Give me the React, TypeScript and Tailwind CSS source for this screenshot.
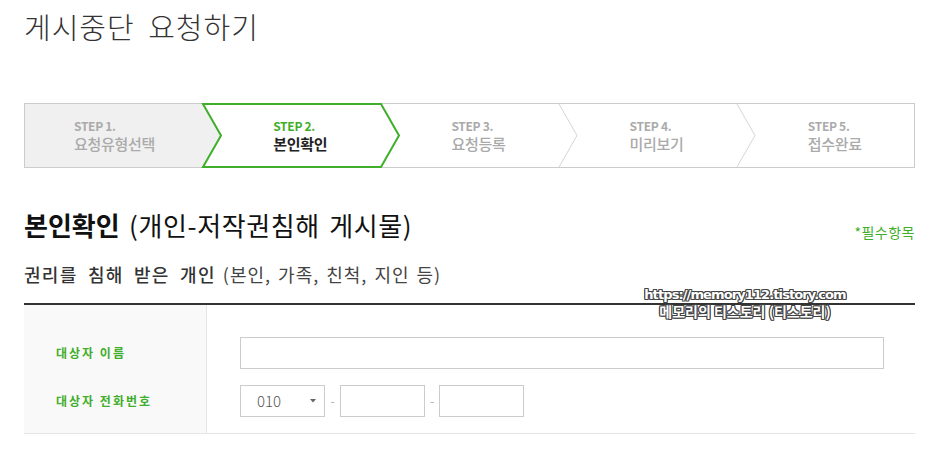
import React from "react";

const steps = [
  { n: "STEP 1.", t: "요청유형선택" },
  { n: "STEP 2.", t: "본인확인" },
  { n: "STEP 3.", t: "요청등록" },
  { n: "STEP 4.", t: "미리보기" },
  { n: "STEP 5.", t: "접수완료" },
];

function StepBar() {
  return (
    <div className="relative ml-[24px] mt-[57px] h-[65px] w-[891px]">
      <svg className="absolute inset-0" width="891" height="65" viewBox="0 0 891 65">
        <rect x="0.5" y="0.5" width="890" height="64" fill="#fff" stroke="#cccccc" />
        <polygon points="1,1 179,1 197,32.5 179,64 1,64" fill="#f0f0f0" />
        <polygon points="179,1 357,1 375,32.5 357,64 179,64 197,32.5" fill="#fff" stroke="#3fae2a" strokeWidth="2" strokeLinejoin="miter" />
        <polyline points="535,1 553,32.5 535,64" fill="none" stroke="#d6d6d6" />
        <polyline points="713,1 731,32.5 713,64" fill="none" stroke="#d6d6d6" />
      </svg>
      <div className="relative grid h-full grid-cols-5">
        {steps.map((s, i) => (
          <div key={i} className={`${i === 0 ? "pl-[50px]" : "pl-[71px]"} pt-[14px]`}>
            <div
              className={`text-[12px] font-bold leading-[17px] tracking-[-0.3px] ${i === 1 ? "text-[#3fae2a]" : "text-[#aaaaaa]"}`}
            >
              {s.n}
            </div>
            <div
              className={`text-[15px] leading-[20px] tracking-[-0.3px] ${i === 1 ? "font-bold text-[#222222]" : "font-medium text-[#aaaaaa]"}`}
            >
              {s.t}
            </div>
          </div>
        ))}
      </div>
    </div>
  );
}

export default function App() {
  return (
    <div className="relative h-[461px] w-[929px] overflow-hidden bg-white font-['Noto_Sans_CJK_KR','Noto_Sans',sans-serif] text-[#333]">
      <h1 className="pl-[24px] pt-[6px] text-[29px] font-light leading-[40px] tracking-[1px] text-[#333] [word-spacing:6px]">
        게시중단 요청하기
      </h1>
      <StepBar />
      <div className="ml-[24px] mt-[40px] flex w-[891px] items-end justify-between">
        <h2 className="text-[26px] leading-[34px] text-[#111]">
          <span className="font-bold">본인확인</span>
          <span className="font-normal tracking-[0.6px] [word-spacing:3px]"> (개인-저작권침해 게시물)</span>
        </h2>
        <div className="pb-[1px] text-[14px] leading-[18px] tracking-[0.5px] text-[#3fae2a]">*필수항목</div>
      </div>
      <div className="ml-[24px] mt-[20px] text-[18px] leading-[24px] text-[#333]">
        <span className="font-medium tracking-[1.3px] [word-spacing:5px]">권리를 침해 받은 개인</span>
        <span className="font-normal tracking-[1px] text-[#444] [word-spacing:2px]"> (본인, 가족, 친척, 지인 등)</span>
      </div>
      <div className="ml-[24px] mt-[17px] w-[891px] border-t-2 border-[#333] border-b border-b-[#e5e5e5]">
        <div className="flex">
          <div className="flex w-[183px] flex-col border-r border-[#e5e5e5] bg-[#f9f9f9] pl-[32px] pt-[32px] pb-[16px]">
            <div className="flex h-[32px] items-center text-[12px] font-bold tracking-[2px] text-[#3fae2a]">대상자 이름</div>
            <div className="mt-[16px] flex h-[32px] items-center text-[12px] font-bold tracking-[2px] text-[#3fae2a]">대상자 전화번호</div>
          </div>
          <div className="flex flex-1 flex-col pl-[33px] pt-[32px] pb-[16px]">
            <div className="h-[32px] w-[644px] border border-[#cccccc] bg-white" />
            <div className="mt-[16px] flex h-[32px] items-center">
              <div className="flex h-[32px] w-[85px] items-center justify-between border border-[#cccccc] bg-white pl-[16px] pr-[8px]">
                <span className="text-[15px] font-light text-[#555]">010</span>
                <svg width="6" height="4" viewBox="0 0 6 4">
                  <polygon points="0,0 6,0 3,3.5" fill="#666" />
                </svg>
              </div>
              <span className="w-[15px] text-center text-[12px] text-[#aaa]">-</span>
              <div className="h-[32px] w-[85px] border border-[#cccccc] bg-white" />
              <span className="w-[14px] text-center text-[12px] text-[#aaa]">-</span>
              <div className="h-[32px] w-[85px] border border-[#cccccc] bg-white" />
            </div>
          </div>
        </div>
      </div>
      <div className="absolute left-[638px] top-[286px] flex w-[214px] flex-col items-center font-['DejaVu_Sans',sans-serif] font-bold leading-[17px] text-white [text-shadow:1px_0_0_#444,-1px_0_0_#444,0_1px_0_#444,0_-1px_0_#444,1px_1px_0_#444,-1px_-1px_0_#444,1px_-1px_0_#444,-1px_1px_0_#444]">
        <div className="text-[13px] tracking-[-0.9px]">https://memory112.tistory.com</div>
        <div className="font-['Noto_Sans_CJK_KR',sans-serif] text-[14px] tracking-[0px]">메모리의 티스토리 (티스토리)</div>
      </div>
    </div>
  );
}
